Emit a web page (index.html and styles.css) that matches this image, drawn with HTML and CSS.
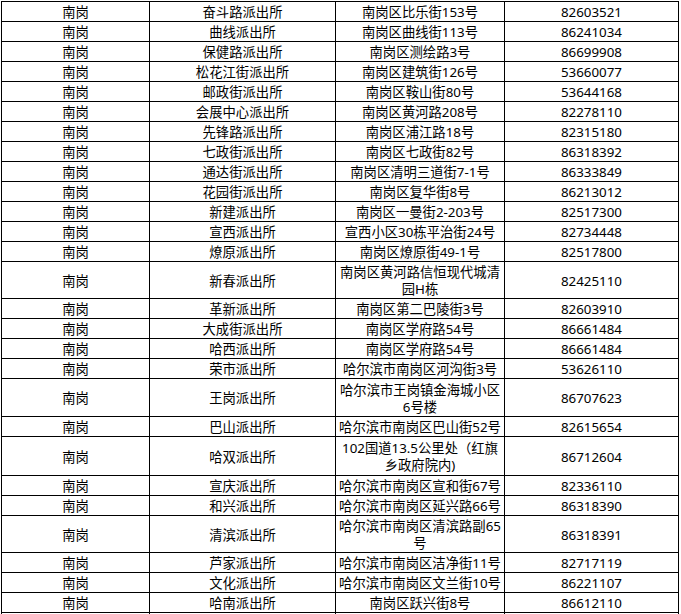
FILE: index.html
```html
<!DOCTYPE html>
<html lang="zh-CN">
<head>
<meta charset="utf-8">
<title>南岗派出所</title>
<link rel="stylesheet" href="styles.css">
</head>
<body>
<table class="grid">
<colgroup><col class="c1"><col class="c2"><col class="c3"><col class="c4"></colgroup>
<tbody>
<tr class="h20"><td>南岗</td><td>奋斗路派出所</td><td>南岗区比乐街153号</td><td>82603521</td></tr>
<tr class="h20"><td>南岗</td><td>曲线派出所</td><td>南岗区曲线街113号</td><td>86241034</td></tr>
<tr class="h20"><td>南岗</td><td>保健路派出所</td><td>南岗区测绘路3号</td><td>86699908</td></tr>
<tr class="h20"><td>南岗</td><td>松花江街派出所</td><td>南岗区建筑街126号</td><td>53660077</td></tr>
<tr class="h20"><td>南岗</td><td>邮政街派出所</td><td>南岗区鞍山街80号</td><td>53644168</td></tr>
<tr class="h20"><td>南岗</td><td>会展中心派出所</td><td>南岗区黄河路208号</td><td>82278110</td></tr>
<tr class="h20"><td>南岗</td><td>先锋路派出所</td><td>南岗区浦江路18号</td><td>82315180</td></tr>
<tr class="h20"><td>南岗</td><td>七政街派出所</td><td>南岗区七政街82号</td><td>86318392</td></tr>
<tr class="h20"><td>南岗</td><td>通达街派出所</td><td>南岗区清明三道街7-1号</td><td>86333849</td></tr>
<tr class="h20"><td>南岗</td><td>花园街派出所</td><td>南岗区复华街8号</td><td>86213012</td></tr>
<tr class="h20"><td>南岗</td><td>新建派出所</td><td>南岗区一曼街2-203号</td><td>82517300</td></tr>
<tr class="h20"><td>南岗</td><td>宣西派出所</td><td>宣西小区30栋平治街24号</td><td>82734448</td></tr>
<tr class="h20"><td>南岗</td><td>燎原派出所</td><td>南岗区燎原街49-1号</td><td>82517800</td></tr>
<tr class="h37"><td>南岗</td><td>新春派出所</td><td>南岗区黄河路信恒现代城清园H栋</td><td>82425110</td></tr>
<tr class="h20"><td>南岗</td><td>革新派出所</td><td>南岗区第二巴陵街3号</td><td>82603910</td></tr>
<tr class="h20"><td>南岗</td><td>大成街派出所</td><td>南岗区学府路54号</td><td>86661484</td></tr>
<tr class="h20"><td>南岗</td><td>哈西派出所</td><td>南岗区学府路54号</td><td>86661484</td></tr>
<tr class="h19"><td>南岗</td><td>荣市派出所</td><td>哈尔滨市南岗区河沟街3号</td><td>53626110</td></tr>
<tr class="h38"><td>南岗</td><td>王岗派出所</td><td>哈尔滨市王岗镇金海城小区6号楼</td><td>86707623</td></tr>
<tr class="h19"><td>南岗</td><td>巴山派出所</td><td>哈尔滨市南岗区巴山街52号</td><td>82615654</td></tr>
<tr class="h39"><td>南岗</td><td>哈双派出所</td><td>102国道13.5公里处（红旗乡政府院内)</td><td>86712604</td></tr>
<tr class="h19"><td>南岗</td><td>宣庆派出所</td><td>哈尔滨市南岗区宣和街67号</td><td>82336110</td></tr>
<tr class="h20"><td>南岗</td><td>和兴派出所</td><td>哈尔滨市南岗区延兴路66号</td><td>86318390</td></tr>
<tr class="h37"><td>南岗</td><td>清滨派出所</td><td>哈尔滨市南岗区清滨路副65号</td><td>86318391</td></tr>
<tr class="h20"><td>南岗</td><td>芦家派出所</td><td>哈尔滨市南岗区洁净街11号</td><td>82717119</td></tr>
<tr class="h20"><td>南岗</td><td>文化派出所</td><td>哈尔滨市南岗区文兰街10号</td><td>86221107</td></tr>
<tr class="h20"><td>南岗</td><td>哈南派出所</td><td>南岗区跃兴街8号</td><td>86612110</td></tr>
<tr class="h20"><td></td><td></td><td></td><td></td></tr>
</tbody>
</table>
</body>
</html>
```
FILE: styles.css
```css
html, body {
  margin: 0;
  padding: 0;
  background: #ffffff;
}
body {
  padding: 1px 0 0 1px;
  font-family: "Noto Sans", "Noto Sans CJK SC", sans-serif;
  font-size: 13.333px;
  color: #000000;
}
.grid {
  border-collapse: collapse;
  table-layout: fixed;
  width: 677px;
}
.c1 { width: 148px; }
.c2 { width: 186px; }
.c3 { width: 169px; }
.c4 { width: 174px; }
.grid td {
  border: 1px solid #000000;
  padding: 2px 2.5px 0 2.5px;
  line-height: 17px;
  text-align: center;
  vertical-align: middle;
  overflow: hidden;
}
.h19 { height: 19px; }
.h20 { height: 20px; }
.h37 { height: 37px; }
.h38 { height: 38px; }
.h39 { height: 39px; }
```
